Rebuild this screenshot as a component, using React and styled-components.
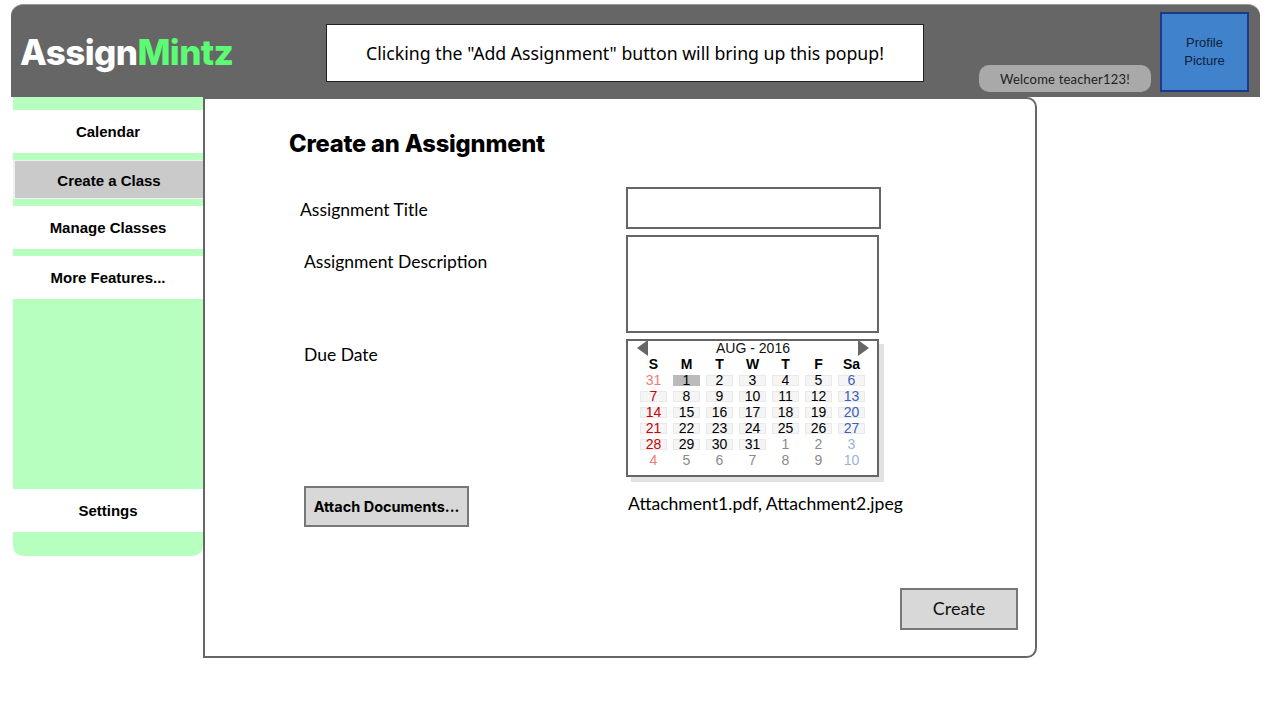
import React from "react";
import styled, { createGlobalStyle } from "styled-components";

const GlobalStyle = createGlobalStyle`
  html, body {
    margin: 0;
    padding: 0;
    background: #fff;
    font-family: "Liberation Sans", Arial, sans-serif;
  }
  * {
    box-sizing: border-box;
  }
`;

const Page = styled.div`
  width: 1267px;
  height: 704px;
  padding: 4px 7px 0 11px;
  overflow: hidden;
`;

//header.....
const Header = styled.header`
  height: 93px;
  background: #666;
  border-top: 1px solid #999;
  border-radius: 12px 12px 0 0;
  display: flex;
  align-items: flex-start;
  padding-left: 9px;
`;

const Logo = styled.div`
  width: 306px;
  margin-top: 24px;
  font-family: "Inter", sans-serif;
  font-weight: 800;
  font-size: 35px;
  line-height: 46px;
  color: #fff;
  white-space: nowrap;
  letter-spacing: -0.6px;
`;

const LogoAccent = styled.span`
  color: #5cfb73;
`;

const Notice = styled.div`
  width: 598px;
  height: 58px;
  margin-top: 19px;
  background: #fff;
  border: 1px solid #222;
  display: flex;
  align-items: center;
  justify-content: center;
  font-family: "Noto Sans", sans-serif;
  font-size: 17.7px;
  color: #000;
  white-space: nowrap;
`;

const Welcome = styled.div`
  width: 172px;
  height: 27px;
  margin: 60px 0 0 55px;
  background: #a9a9a9;
  border-radius: 10px;
  display: flex;
  align-items: center;
  justify-content: center;
  font-family: "Lato", sans-serif;
  font-size: 13px;
  letter-spacing: 0.2px;
  color: #222;
`;

const Profile = styled.div`
  width: 89px;
  height: 80px;
  margin: 7px 0 0 9px;
  background: #4083cc;
  border: 2px solid #1d3a8a;
  display: flex;
  align-items: center;
  justify-content: center;
  text-align: center;
  font-size: 13px;
  line-height: 18px;
  color: #10203a;
`;

//body.....
const Body = styled.div`
  display: flex;
  align-items: flex-start;
  padding-left: 2px;
`;

const Sidebar = styled.nav`
  width: 190px;
  height: 459px;
  flex-shrink: 0;
  background: #b7ffbf;
  border-radius: 0 0 10px 10px;
  padding: 13px 0 24px;
  display: flex;
  flex-direction: column;
  gap: 7px;
`;

const NavItem = styled.div`
  height: ${(props) => (props.active ? "39px" : "43px")};
  margin-top: ${(props) => (props.bottom ? "auto" : "0")};
  background: ${(props) => (props.active ? "#cacaca" : "#fff")};
  border-style: solid;
  border-color: #f0f0f0;
  border-width: ${(props) => (props.active ? "1px 0 1px 2px" : "0")};
  padding-top: ${(props) => (props.active ? "2px" : "0")};
  display: flex;
  align-items: center;
  justify-content: center;
  font-weight: 700;
  font-size: 15px;
  color: #000;
`;

const Panel = styled.main`
  width: 834px;
  height: 561px;
  flex-shrink: 0;
  background: #fff;
  border: 2px solid #666;
  border-radius: 0 10px 10px 0;
  display: flex;
  flex-direction: column;
  padding: 30px 17px 26px 84px;
  font-family: "Lato", sans-serif;
  color: #000;
`;

const Title = styled.h1`
  margin: 0 0 28px;
  font-family: "Inter", sans-serif;
  font-weight: 800;
  font-size: 23.7px;
  line-height: 30px;
  height: 30px;
  letter-spacing: -0.2px;
`;

const Row = styled.div`
  display: grid;
  grid-template-columns: 337px 1fr;
  align-items: start;
  margin-bottom: ${(props) => props.gap}px;
`;

const Label = styled.label`
  display: block;
  margin-left: ${(props) => props.indent}px;
  margin-top: ${(props) => props.top}px;
  font-size: 17.5px;
  line-height: 24px;
`;

const TitleInput = styled.input`
  display: block;
  width: 255px;
  height: 42px;
  border: 2px solid #666;
  background: #fff;
  outline: none;
`;

const DescriptionInput = styled.textarea`
  display: block;
  width: 253px;
  height: 98px;
  border: 2px solid #666;
  background: #fff;
  outline: none;
  resize: none;
`;

//calendar.....
const CalendarBox = styled.div`
  width: 253px;
  height: 138px;
  border: 2px solid #666;
  background: #fff;
  box-shadow: 5px 5px 0 #e2e2e2;
  padding: 0 8px 0 9px;
  font-family: "Liberation Sans", Arial, sans-serif;
`;

const CalendarHead = styled.div`
  height: 16px;
  margin-top: -1px;
  display: flex;
  align-items: center;
  justify-content: space-between;
  font-size: 14px;
  line-height: 16px;
  color: #111;
`;

const Arrow = styled.span`
  width: 0;
  height: 0;
  border-top: 8px solid transparent;
  border-bottom: 8px solid transparent;
  border-right: ${(props) => (props.left ? "11px solid #666" : "0")};
  border-left: ${(props) => (props.left ? "0" : "11px solid #666")};
`;

const WeekDays = styled.div`
  display: grid;
  grid-template-columns: repeat(7, 33px);
  height: 16px;
  font-weight: 700;
  font-size: 14px;
  line-height: 16px;
  text-align: center;
`;

const DayGrid = styled.div`
  display: grid;
  grid-template-columns: repeat(7, 33px);
  grid-auto-rows: 11px;
  row-gap: 5px;
  margin-top: 3px;
`;

const dayColors = {
  sun: "#cc0000",
  sunFaded: "#ea7b7b",
  sat: "#3a5fb8",
  satFaded: "#9cb0e0",
  plain: "#000",
  faded: "#8a8a8a",
};

const Day = styled.div`
  width: 27px;
  height: 11px;
  justify-self: center;
  background: ${(props) =>
    props.selected ? "#bbb" : props.chip ? "#f5f5f5" : "transparent"};
  box-shadow: ${(props) =>
    props.chip && !props.selected ? "inset 0 0 0 1px #e9e9e9" : "none"};
  color: ${(props) => dayColors[props.tone]};
  font-size: 14px;
  line-height: 11px;
  text-align: center;
`;

const days = [
  ["31", "sunFaded"], ["1", "plain", true, true], ["2", "plain", true], ["3", "plain", true], ["4", "plain", true], ["5", "plain", true], ["6", "sat", true],
  ["7", "sun", true], ["8", "plain", true], ["9", "plain", true], ["10", "plain", true], ["11", "plain", true], ["12", "plain", true], ["13", "sat", true],
  ["14", "sun", true], ["15", "plain", true], ["16", "plain", true], ["17", "plain", true], ["18", "plain", true], ["19", "plain", true], ["20", "sat", true],
  ["21", "sun", true], ["22", "plain", true], ["23", "plain", true], ["24", "plain", true], ["25", "plain", true], ["26", "plain", true], ["27", "sat", true],
  ["28", "sun", true], ["29", "plain", true], ["30", "plain", true], ["31", "plain", true], ["1", "faded"], ["2", "faded"], ["3", "satFaded"],
  ["4", "sunFaded"], ["5", "faded"], ["6", "faded"], ["7", "faded"], ["8", "faded"], ["9", "faded"], ["10", "satFaded"],
];

const weekDays = ["S", "M", "T", "W", "T", "F", "Sa"];

const AttachButton = styled.button`
  width: 165px;
  height: 41px;
  margin-left: 15px;
  padding: 0;
  background: #d8d8d8;
  border: 2px solid #777;
  font-family: "Inter", sans-serif;
  font-weight: 700;
  font-size: 14.5px;
  color: #000;
  white-space: nowrap;
`;

const Attachments = styled.div`
  margin: 6px 0 0 2px;
  font-size: 17.6px;
  line-height: 24px;
`;

const CreateButton = styled.button`
  width: 118px;
  height: 42px;
  margin-top: auto;
  align-self: flex-end;
  padding: 0 0 2px;
  background: #d8d8d8;
  border: 2px solid #777;
  font-family: "Lato", sans-serif;
  font-size: 18px;
  color: #111;
`;

export default function App() {
  return (
    <Page>
      <GlobalStyle />
      <Header>
        <Logo>
          Assign<LogoAccent>Mintz</LogoAccent>
        </Logo>
        <Notice>Clicking the "Add Assignment" button will bring up this popup!</Notice>
        <Welcome>Welcome teacher123!</Welcome>
        <Profile>
          Profile
          <br />
          Picture
        </Profile>
      </Header>
      <Body>
        <Sidebar>
          <NavItem>Calendar</NavItem>
          <NavItem active>Create a Class</NavItem>
          <NavItem>Manage Classes</NavItem>
          <NavItem>More Features...</NavItem>
          <NavItem bottom>Settings</NavItem>
        </Sidebar>
        <Panel>
          <Title>Create an Assignment</Title>
          <Row gap={6}>
            <Label indent={11} top={11}>Assignment Title</Label>
            <TitleInput />
          </Row>
          <Row gap={6}>
            <Label indent={15} top={15}>Assignment Description</Label>
            <DescriptionInput />
          </Row>
          <Row gap={9}>
            <Label indent={15} top={4}>Due Date</Label>
            <CalendarBox>
              <CalendarHead>
                <Arrow left />
                AUG - 2016
                <Arrow />
              </CalendarHead>
              <WeekDays>
                {weekDays.map((d, i) => (
                  <div key={i}>{d}</div>
                ))}
              </WeekDays>
              <DayGrid>
                {days.map(([label, tone, chip, selected], i) => (
                  <Day key={i} tone={tone} chip={chip} selected={selected}>
                    {label}
                  </Day>
                ))}
              </DayGrid>
            </CalendarBox>
          </Row>
          <Row gap={0}>
            <AttachButton>Attach Documents...</AttachButton>
            <Attachments>Attachment1.pdf, Attachment2.jpeg</Attachments>
          </Row>
          <CreateButton>Create</CreateButton>
        </Panel>
      </Body>
    </Page>
  );
}
